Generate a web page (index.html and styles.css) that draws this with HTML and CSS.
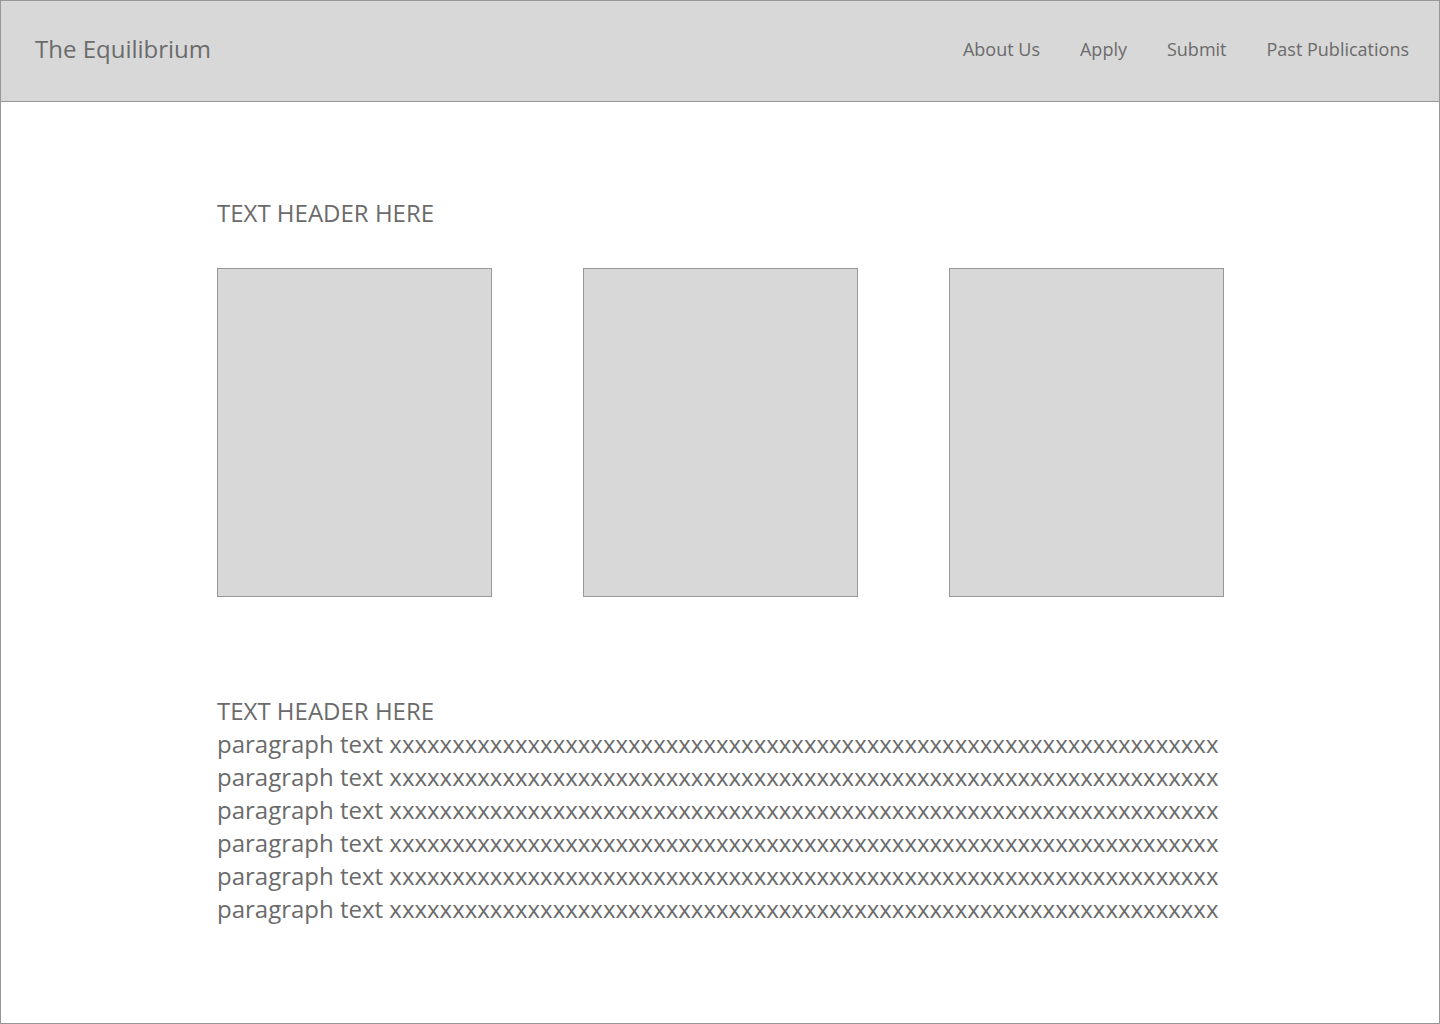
FILE: index.html
```html
<!DOCTYPE html>
<html lang="en">
<head>
<meta charset="utf-8">
<title>The Equilibrium</title>
<link rel="stylesheet" href="styles.css">
</head>
<body>
<div class="frame">
  <header class="topbar">
    <div class="brand">The Equilibrium</div>
    <nav class="nav">
      <a href="#">About Us</a>
      <a href="#">Apply</a>
      <a href="#">Submit</a>
      <a href="#">Past Publications</a>
    </nav>
  </header>
  <main class="content">
    <h2 class="section-title">TEXT HEADER HERE</h2>
    <div class="cards">
      <div class="card"></div>
      <div class="card"></div>
      <div class="card"></div>
    </div>
    <section class="text-block">
      <h2 class="section-title">TEXT HEADER HERE</h2>
      <p class="para">paragraph text xxxxxxxxxxxxxxxxxxxxxxxxxxxxxxxxxxxxxxxxxxxxxxxxxxxxxxxxxxxxxxxxxx</p>
      <p class="para">paragraph text xxxxxxxxxxxxxxxxxxxxxxxxxxxxxxxxxxxxxxxxxxxxxxxxxxxxxxxxxxxxxxxxxx</p>
      <p class="para">paragraph text xxxxxxxxxxxxxxxxxxxxxxxxxxxxxxxxxxxxxxxxxxxxxxxxxxxxxxxxxxxxxxxxxx</p>
      <p class="para">paragraph text xxxxxxxxxxxxxxxxxxxxxxxxxxxxxxxxxxxxxxxxxxxxxxxxxxxxxxxxxxxxxxxxxx</p>
      <p class="para">paragraph text xxxxxxxxxxxxxxxxxxxxxxxxxxxxxxxxxxxxxxxxxxxxxxxxxxxxxxxxxxxxxxxxxx</p>
      <p class="para">paragraph text xxxxxxxxxxxxxxxxxxxxxxxxxxxxxxxxxxxxxxxxxxxxxxxxxxxxxxxxxxxxxxxxxx</p>
    </section>
  </main>
</div>
</body>
</html>
```

FILE: styles.css
```css
* { box-sizing: border-box; }
html, body { margin: 0; padding: 0; }
body {
  font-family: "Open Sans", "Liberation Sans", sans-serif;
  color: #6b6b6b;
  background: #ffffff;
}
.frame {
  width: 1440px;
  height: 1024px;
  border: 1px solid #979797;
  overflow: hidden;
}
.topbar {
  height: 101px;
  background: #d8d8d8;
  border-bottom: 1px solid #979797;
  display: flex;
  align-items: center;
  justify-content: space-between;
  padding: 0 30px 0 34px;
}
.brand {
  font-size: 24px;
  line-height: 33px;
  margin-top: -6px;
}
.nav {
  display: flex;
  gap: 40px;
  margin-top: -5px;
}
.nav a {
  color: #6b6b6b;
  text-decoration: none;
  font-size: 18px;
  line-height: 24px;
}
.content {
  padding: 94px 0 0 216px;
}
.section-title {
  margin: 0;
  font-weight: 400;
  font-size: 24px;
  line-height: 33px;
}
.cards {
  display: flex;
  gap: 91px;
  margin-top: 39px;
}
.card {
  width: 275px;
  height: 329px;
  background: #d8d8d8;
  border: 1px solid #979797;
}
.text-block {
  margin-top: 97px;
}
.para {
  margin: 0;
  font-size: 24px;
  line-height: 33px;
  white-space: nowrap;
}
```
